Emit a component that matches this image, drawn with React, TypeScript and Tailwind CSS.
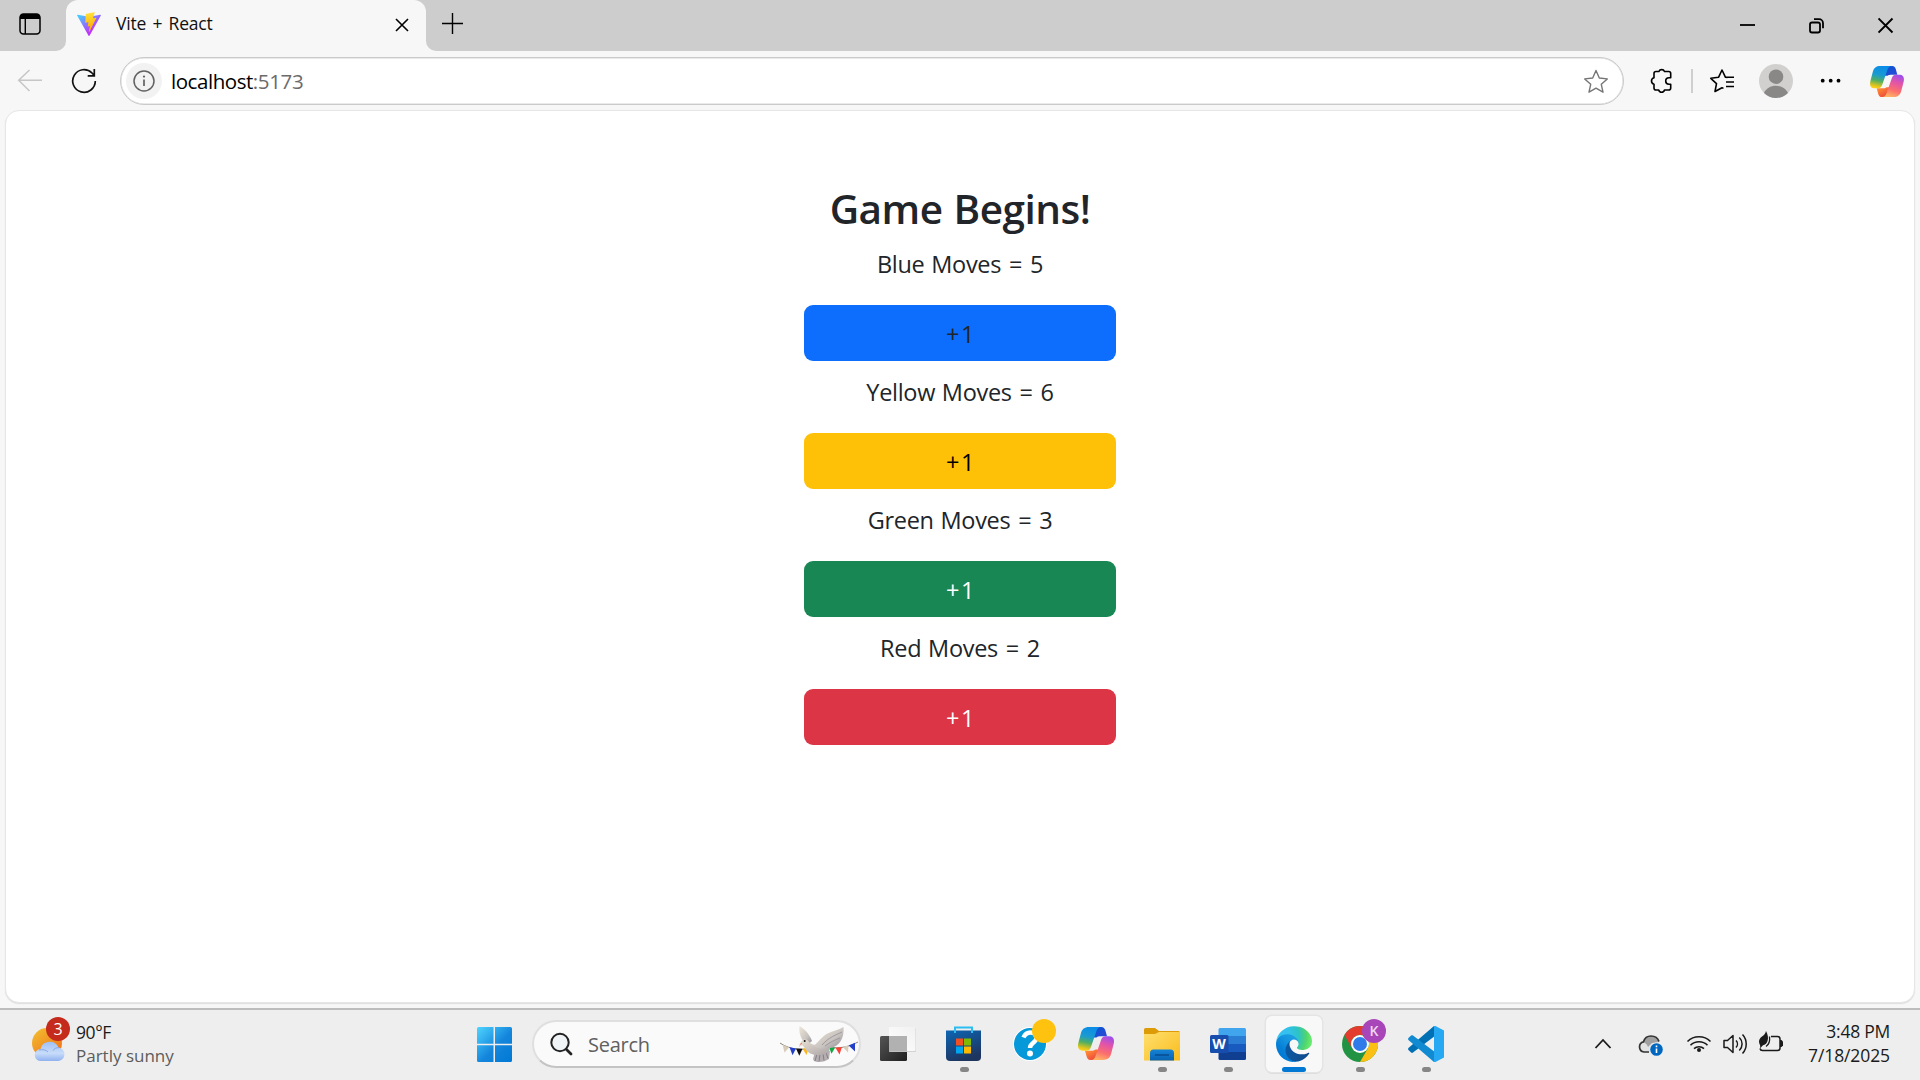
import React from 'react';

type ArtProps = { box: string; className: string; children: React.ReactNode };

/* Small drawing whose viewBox is given in screen units. */
function Art({ box, className, children }: ArtProps) {
  return (
    <svg viewBox={box} fill="none" className={`block shrink-0 ${className}`}>
      {children}
    </svg>
  );
}

function ViteLogo() {
  return (
    <svg viewBox="0 0 256 257" className="ml-[11px] block size-6 shrink-0">
      <defs>
        <linearGradient id="viteA" x1="-.8%" x2="57.6%" y1="7.6%" y2="78.4%">
          <stop offset="0" stopColor="#41D1FF" />
          <stop offset="1" stopColor="#BD34FE" />
        </linearGradient>
        <linearGradient id="viteB" x1="43.4%" x2="50.3%" y1="2.2%" y2="89%">
          <stop offset="0" stopColor="#FFEA83" />
          <stop offset=".083" stopColor="#FFDD35" />
          <stop offset="1" stopColor="#FFA800" />
        </linearGradient>
      </defs>
      <path fill="url(#viteA)" d="M255.153 37.938L134.897 252.976c-2.483 4.44-8.862 4.466-11.382.048L.875 37.958c-2.746-4.814 1.371-10.646 6.827-9.67l120.385 21.517a6.537 6.537 0 0 0 2.322-.004l117.867-21.483c5.438-.991 9.574 4.796 6.877 9.62Z" />
      <path fill="url(#viteB)" d="M185.432.063L96.44 17.501a3.268 3.268 0 0 0-2.634 3.014l-5.474 92.456a3.268 3.268 0 0 0 3.997 3.378l24.777-5.718c2.318-.535 4.413 1.507 3.936 3.838l-7.361 36.047c-.495 2.426 1.782 4.5 4.151 3.78l15.304-4.649c2.372-.72 4.652 1.36 4.15 3.788l-11.698 56.621c-.732 3.542 3.979 5.473 5.943 2.437l1.313-2.028l72.516-144.72c1.215-2.423-.88-5.186-3.54-4.672l-25.505 4.922c-2.396.462-4.435-1.77-3.759-4.114l16.646-57.705c.677-2.35-1.37-4.583-3.769-4.113Z" />
    </svg>
  );
}

function Copilot({ id, className }: { id: string; className: string }) {
  return (
    <svg viewBox="0 0 36 33" fill="none" className={`block shrink-0 ${className}`}>
      <defs>
        <linearGradient id={`${id}a`} x1="12" y1="0" x2="7" y2="24" gradientUnits="userSpaceOnUse">
          <stop offset="0" stopColor="#0b8ce8" />
          <stop offset=".4" stopColor="#1a9bd0" />
          <stop offset=".65" stopColor="#4fae63" />
          <stop offset=".9" stopColor="#e6c61a" />
          <stop offset="1" stopColor="#ffd21f" />
        </linearGradient>
        <linearGradient id={`${id}b`} x1="30" y1="9" x2="22" y2="33" gradientUnits="userSpaceOnUse">
          <stop offset="0" stopColor="#9a4df0" />
          <stop offset=".35" stopColor="#e254a8" />
          <stop offset=".7" stopColor="#fb6f6d" />
          <stop offset="1" stopColor="#ffb265" />
        </linearGradient>
        <linearGradient id={`${id}c`} x1="18" y1="1" x2="25" y2="11" gradientUnits="userSpaceOnUse">
          <stop offset="0" stopColor="#0d55cf" />
          <stop offset="1" stopColor="#2a48d8" />
        </linearGradient>
        <linearGradient id={`${id}d`} x1="10" y1="24" x2="15" y2="33" gradientUnits="userSpaceOnUse">
          <stop offset="0" stopColor="#ff8a35" />
          <stop offset="1" stopColor="#ee4a3c" />
        </linearGradient>
      </defs>
      <path fill={`url(#${id}c)`} d="M17 0h6.500c2 0 3.200 1.300 3.800 3.300L29 9.300h-6c-2 0-3.500.2-4.500 1.200H15Z" />
      <path fill={`url(#${id}d)`} d="M19 33h-6.500c-2 0-3.200-1.300-3.800-3.300L7 23.700h6c2 0 3.500-.2 4.500-1.200H21Z" />
      <path fill={`url(#${id}a)`} d="M11 0h12c-2.500 0-3.800 1.700-4.700 4.500l-5.100 14.700c-.9 2.900-2 4.500-5 4.500H5c-4.800 0-5.700-3.600-4.600-8L2.900 6.200C4 2.100 6.500 0 11 0Z" />
      <path fill={`url(#${id}b)`} d="M25 33H13c2.500 0 3.800-1.700 4.700-4.500l5.100-14.700c.9-2.900 2-4.500 5-4.500H31c4.800 0 5.700 3.600 4.600 8l-2.500 9.500C32 30.900 29.500 33 25 33Z" />
    </svg>
  );
}

function TabStrip() {
  return (
    <header className="flex h-[51px] shrink-0 bg-[#cdcdcd]">
      <div className="flex w-[66px] bg-[#cdcdcd] pl-[19px] pt-[13px]">
        <Art box="19 13 22 22" className="size-[22px]">
          <rect x="20" y="14" width="20" height="20" rx="3.500" stroke="#000" strokeWidth="1.500" />
          <path d="M20 19v-2a3 3 0 0 1 3-3h14a3 3 0 0 1 3 3v2Z" fill="#000" />
          <path d="M25.300 18v16" stroke="#000" strokeWidth="1.400" />
        </Art>
      </div>
      <div className="relative flex w-[360px] items-center rounded-t-[12px] bg-[#f7f7f7] pb-[3px]">
        <Art box="0 0 10 10" className="absolute -left-[10px] bottom-0 size-[10px]">
          <path d="M10 0v10H0A10 10 0 0 0 10 0Z" fill="#f7f7f7" />
        </Art>
        <Art box="0 0 10 10" className="absolute -right-[10px] bottom-0 size-[10px]">
          <path d="M0 0v10h10A10 10 0 0 1 0 0Z" fill="#f7f7f7" />
        </Art>
        <ViteLogo />
        <span className="ml-[15px] w-[269px] whitespace-nowrap pb-[2px] text-[17.500px] leading-6 tracking-[-0.2px] [word-spacing:2px] text-[#111]">Vite + React</span>
        <Art box="396 18 14 14" className="mt-[2px] ml-[10px] size-[14px]">
          <path d="m397 19 12 12m0-12-12 12" stroke="#000" strokeWidth="1.600" />
        </Art>
      </div>
      <Art box="442 13 22 22" className="ml-[16px] mt-[13px] size-[22px]">
        <path d="M452.500 13v21M442 23.500h21" stroke="#000" strokeWidth="1.400" />
      </Art>
      <div className="ml-auto flex pt-[17px] pr-[26px]">
        <Art box="1740 17 16 17" className="mr-[53px] h-[17px] w-4">
          <path d="M1740 25h15" stroke="#000" strokeWidth="1.800" />
        </Art>
        <Art box="1809 17 16 17" className="mr-[53px] h-[17px] w-4">
          <rect x="1810" y="22.500" width="10" height="10" rx="2" stroke="#000" strokeWidth="1.800" />
          <path d="M1814 19.200h5a4 4 0 0 1 4 4v5" stroke="#000" strokeWidth="1.800" />
        </Art>
        <Art box="1878 17 16 17" className="h-[17px] w-4">
          <path d="m1878.500 18.500 14 14m0-14-14 14" stroke="#000" strokeWidth="1.900" />
        </Art>
      </div>
    </header>
  );
}

function Toolbar() {
  return (
    <div className="flex h-[58px] shrink-0 items-center pt-[2px]">
      <Art box="17 69 26 24" className="ml-[17px] h-6 w-[26px]">
        <path d="M42 80.300H19M29.500 70 18.700 80.300 29.500 91" stroke="#c6c6c6" strokeWidth="1.500" />
      </Art>
      <Art box="71 68 26 26" className="ml-[28px] size-[26px]">
        <path d="M95.300 81A11.300 11.300 0 1 1 92 73l2 2.300M94.300 69v6.800h-6.600" stroke="#111" strokeWidth="1.700" />
      </Art>
      <div className="ml-[23px] flex h-[48px] w-[1504px] items-center rounded-full border border-[#cacaca] bg-white pl-[5px] shadow-[inset_0_0_0_0.5px_#d6d6d6]">
        <div className="flex size-9 items-center justify-center rounded-full bg-[#f2f2f2]">
          <Art box="0 0 22 22" className="size-[22px]">
            <circle cx="11" cy="11" r="10" stroke="#616161" strokeWidth="1.500" />
            <path d="M11 9.500v6.500" stroke="#616161" strokeWidth="1.700" />
            <circle cx="11" cy="6.600" r="1.100" fill="#616161" />
          </Art>
        </div>
        <span className="ml-[9px] whitespace-nowrap text-[20.500px] tracking-[-0.45px] leading-7 text-black">
          localhost<span className="tracking-[-0.350px] text-[#6b6b6b]">:5173</span>
        </span>
        <Art box="1583 69 26 25" className="ml-auto mr-[14px] h-[25px] w-[26px]">
          <path d="m1596 70.500 3.300 7.500 8 .9-6 5.400 1.700 7.900-7-4-7 4 1.700-7.900-6-5.400 8-.9Z" stroke="#767676" strokeWidth="1.400" strokeLinejoin="round" />
        </Art>
      </div>
      <Art box="1650 68 24 26" className="ml-[26px] h-[26px] w-6">
        <path d="M1656 71.500h2.900a3 3 0 0 1 5.600 0h4.200a2 2 0 0 1 2 2v4.200h-1.700a3.300 3.300 0 0 0 0 6.600h1.700v3.700a2 2 0 0 1-2 2h-4.200a3 3 0 0 1-5.800 0h-2.700a2 2 0 0 1-2-2v-3.800a3.300 3.300 0 0 1 0-6.400v-4.300a2 2 0 0 1 2-2Z" stroke="#000" strokeWidth="1.600" strokeLinejoin="round" />
      </Art>
      <div className="ml-[17px] h-6 w-[2px] bg-[#cfcfcf]" />
      <Art box="1709 68 26 26" className="ml-[16px] size-[26px]">
        <path d="M1727.500 77.500l-2-.2-3.500-7.300-3.500 7.300-7.700 1 5.700 5.300-1.500 7.900 7-3.800 1.500.7M1725.500 77.300h8.500M1726 82h8M1726 86.500h8" stroke="#000" strokeWidth="1.600" strokeLinejoin="round" />
      </Art>
      <Art box="1759 64 34 34" className="ml-[24px] size-[34px]">
        <circle cx="1776" cy="81" r="17" fill="#d2d0ce" />
        <circle cx="1776" cy="76.700" r="7.300" fill="#8a8886" />
        <path d="M1764 93c2-4.500 6.500-7.200 12-7.200s10 2.700 12 7.200a17 17 0 0 1-24 0Z" fill="#8a8886" />
      </Art>
      <Art box="1820 79 22 6" className="ml-[27px] h-[6px] w-[22px]">
        <circle cx="1822.700" cy="81.700" r="1.900" fill="#000" />
        <circle cx="1830.700" cy="81.700" r="1.900" fill="#000" />
        <circle cx="1838.500" cy="81.700" r="1.900" fill="#000" />
      </Art>
      <Copilot id="cpTop" className="ml-[28px] h-[31px] w-[34px]" />
    </div>
  );
}

const players = [
  { name: 'Blue', moves: 5, style: 'bg-[#0d6efd] text-[#212529]' },
  { name: 'Yellow', moves: 6, style: 'bg-[#ffc107] text-black' },
  { name: 'Green', moves: 3, style: 'bg-[#198754] text-white' },
  { name: 'Red', moves: 2, style: 'bg-[#dc3545] text-white' },
];

function Game() {
  return (
    <main className="mx-[5px] mt-[1px] flex h-[893px] shrink-0 flex-col items-center rounded-[14px] border border-[#e6e6e6] bg-white pt-[68px] text-[#212529] shadow-[0_1px_1px_#dedede]">
      <h1 className="h-[62px] whitespace-nowrap text-[40.500px] font-semibold leading-[60px] tracking-[-0.500px] [word-spacing:1px]">Game Begins!</h1>
      {players.map((p) => (
        <section key={p.name} className="flex h-32 flex-col items-center">
          <p className="h-[64px] whitespace-nowrap pt-[5px] text-[23.500px] leading-[36px] tracking-[-0.300px] [word-spacing:1px]">
            {p.name} Moves <span className="mx-[1px]">=</span> {p.moves}
          </p>
          <button className={`flex h-[56px] w-[312px] items-center justify-center rounded-[9px] pt-[2px] pl-[2px] text-[23.500px] leading-9 tracking-[1.500px] ${p.style}`}>+1</button>
        </section>
      ))}
    </main>
  );
}

function Weather() {
  return (
    <div className="flex w-[477px] shrink-0 pl-[31px]">
      <div className="relative mt-[6px] h-[48px] w-[40px]">
        <Art box="31 1016 40 48" className="h-[48px] w-[40px]">
          <defs>
            <linearGradient id="sun" x1="0" y1="0" x2=".8" y2="1">
              <stop offset="0" stopColor="#f2c230" />
              <stop offset="1" stopColor="#f0701a" />
            </linearGradient>
            <linearGradient id="cloud" x1="0" y1="0" x2="0" y2="1">
              <stop offset="0" stopColor="#9fc0f5" />
              <stop offset=".6" stopColor="#c8dcfa" />
              <stop offset="1" stopColor="#8fb2ef" />
            </linearGradient>
          </defs>
          <circle cx="47" cy="1043" r="15" fill="url(#sun)" />
          <path d="M41 1061a6 6 0 0 1-.5-12 9.500 9.500 0 0 1 18-1.500 6.800 6.800 0 0 1 0 13.500Z" fill="url(#cloud)" />
          <path d="M39 1050c4-1 7 0 9 2M59 1047.700c-3-.2-5 1-6 3" stroke="#86a9e8" strokeWidth="1" />
        </Art>
        <div className="absolute left-[15px] top-[1px] flex size-6 items-center justify-center rounded-full bg-[#c42b1c] text-[16px] leading-none text-white">3</div>
      </div>
      <div className="ml-[5px] pt-[10px] text-[17px] leading-6">
        <div className="text-[17.500px] tracking-[-0.4px] text-[#1a1a1a]">90°F</div>
        <div className="whitespace-nowrap text-[#5c5c5c]">Partly sunny</div>
      </div>
    </div>
  );
}

function WindowsLogo() {
  return (
    <Art box="0 0 35 35" className="mt-[17px] size-[35px]">
      <defs>
        <linearGradient id="win" x1="0" y1="0" x2="35" y2="35" gradientUnits="userSpaceOnUse">
          <stop offset="0" stopColor="#4fd5ff" />
          <stop offset=".55" stopColor="#1486dc" />
          <stop offset="1" stopColor="#0078d4" />
        </linearGradient>
      </defs>
      <path fill="url(#win)" d="M1.500 0h15v16.700H0V1.500A1.500 1.500 0 0 1 1.500 0ZM18 0h15.500A1.500 1.500 0 0 1 35 1.500v15.200H18ZM0 18.200h16.500V35h-15A1.500 1.500 0 0 1 0 33.500ZM18 18.200h17v15.300a1.500 1.500 0 0 1-1.500 1.500H18Z" />
    </Art>
  );
}

function Dove() {
  return (
    <Art box="779 1024 80 40" className="ml-auto h-10 w-20">
      <defs>
        <linearGradient id="wing" x1="0" y1="0" x2="1" y2="1">
          <stop offset="0" stopColor="#eee6d8" />
          <stop offset=".6" stopColor="#c8c3bf" />
          <stop offset="1" stopColor="#8c8894" />
        </linearGradient>
        <linearGradient id="dbody" x1="0" y1="0" x2="1" y2="1">
          <stop offset="0" stopColor="#ece3d5" />
          <stop offset="1" stopColor="#a9a3a5" />
        </linearGradient>
      </defs>
      <path d="M780 1043c10 7 24 8 38 4M829 1047c10 2 20 0 29-5" stroke="#8b857e" strokeWidth="1" />
      <path d="m782.500 1044.500 6.500 3-4.500 5Z" fill="#d8cbb8" />
      <path d="m789.500 1047.300 6.500 1.200-3.500 6.700Z" fill="#2340c8" />
      <path d="m796 1048.500 6.500.3-3.200 7Z" fill="#111" />
      <path d="m802.500 1048.500 6-.5-2 7Z" fill="#fdb61c" />
      <path d="m829 1047.300 6 .4-3.500 6Z" fill="#12a846" />
      <path d="m835.500 1047.800 6.500-.8-2.500 7.500Z" fill="#fb4136" />
      <path d="m842.500 1046.800 6-1.300-.5 7Z" fill="#d8cbb8" />
      <path d="m848.700 1045.500 6.300-2.800v8.800Z" fill="#2340c8" />
      <path d="M799.500 1026c5 3 10 8 12.500 15l-5 4c-6-5-8.500-12-7.500-19Z" fill="url(#wing)" />
      <path d="m815 1052 15-1-1 8-4 2-3 .7-5 .3-3-1-1-2Z" fill="#b5aeb0" />
      <path d="m817 1054-2 7m5-7-1 7.500m4-8 1 7m2-8 2 6" stroke="#77717d" strokeWidth=".8" />
      <path d="M801 1042c1-3 6-3.500 8 0 3 3 7 4 12 2l9 4c0 5-7 8-14 7-6-.8-9-3-12-8l-2-2-3 2c0-2 1-3 2-5Z" fill="url(#dbody)" />
      <path d="M843.500 1027c1 11-4 19-13 21-6 1.500-12 1-17-2 4-3 7-8 13-12 6-3 12-4 17-7Z" fill="url(#wing)" />
      <path d="M842 1032c-6 3-13 5-20 13m18-7c-5 2-10 4-15 8" stroke="#938e98" strokeWidth=".8" />
      <circle cx="804.700" cy="1041" r="1" fill="#111" />
      <path d="m801.500 1042.500-2 2.500 2.500-1Z" fill="#f2745d" />
    </Art>
  );
}

function SearchBox() {
  return (
    <div className="ml-5 mt-[10px] flex h-[48px] w-[329px] items-center rounded-full border-2 border-[#dfdfdf] border-b-[#c4c4c4] bg-[#fafafa]">
      <Art box="549 1032 24 24" className="ml-[15px] size-6">
        <circle cx="560" cy="1042.500" r="8.700" stroke="#222" strokeWidth="2" fill="#f0f4f7" />
        <path d="m566.500 1049.500 4.500 4.500" stroke="#222" strokeWidth="2.800" strokeLinecap="round" />
      </Art>
      <span className="ml-[15px] pt-[2px] text-[20px] leading-7 tracking-[-0.25px] text-[#606060]">Search</span>
      <Dove />
    </div>
  );
}

function TaskViewIcon() {
  return (
    <Art box="0 0 36 36" className="size-9">
      <defs>
        <linearGradient id="tv" x1="0" y1="0" x2="1" y2="1">
          <stop offset="0" stopColor="#555" />
          <stop offset="1" stopColor="#1f1f1f" />
        </linearGradient>
        <linearGradient id="tvw" x1="0" y1="1" x2="1" y2="0">
          <stop offset="0" stopColor="#fff" />
          <stop offset="1" stopColor="#f1f1f1" />
        </linearGradient>
      </defs>
      <rect x="0" y="10" width="27" height="25" rx="1.500" fill="url(#tv)" />
      <rect x="9" y="2" width="27" height="24" rx="1" fill="#d2d2d2" />
      <rect x="9" y="1" width="26.500" height="24" rx="1" fill="url(#tvw)" />
      <path d="M9 10h18v15.500H9Z" fill="#b1b1b1" />
    </Art>
  );
}

function StoreIcon() {
  return (
    <Art box="0 0 36 36" className="size-9">
      <defs>
        <linearGradient id="store" x1="0" y1="0" x2=".4" y2="1">
          <stop offset="0" stopColor="#0d66b4" />
          <stop offset="1" stopColor="#1e3560" />
        </linearGradient>
      </defs>
      <path d="M0 4.500h35V31a4 4 0 0 1-4 4H4a4 4 0 0 1-4-4Z" fill="url(#store)" />
      <path d="M9 7V1.500h17V7" stroke="#2bbdf2" strokeWidth="2" />
      <path d="M10 12.500h7v7h-7Z" fill="#f25022" />
      <path d="M18 12.500h7v7h-7Z" fill="#7fba00" />
      <path d="M10 20.500h7v7h-7Z" fill="#00a4ef" />
      <path d="M18 20.500h7v7h-7Z" fill="#ffb900" />
    </Art>
  );
}

function HelpIcon() {
  return (
    <div className="relative size-9">
      <Art box="0 0 36 36" className="size-9">
        <circle cx="18" cy="18" r="17" fill="#fff" />
        <circle cx="18" cy="18" r="16" fill="#0599d9" />
        <path d="M11.500 11.500c1.500-3.500 4-5 7-5s6 2 6 5.300c0 5-6.500 5-6.500 10.200" stroke="#fff" strokeWidth="4.400" />
        <circle cx="18" cy="27.500" r="3" fill="#fff" />
      </Art>
      <div className="absolute left-5 top-[-7px] size-6 rounded-full bg-[#ffc20e]" />
    </div>
  );
}

function FolderIcon() {
  return (
    <Art box="0 0 36 36" className="size-9">
      <defs>
        <linearGradient id="fold" x1="0" y1="0" x2="1" y2="1">
          <stop offset="0" stopColor="#ffdf6e" />
          <stop offset="1" stopColor="#f9bc1d" />
        </linearGradient>
        <linearGradient id="foldb" x1="0" y1="0" x2="0" y2="1">
          <stop offset="0" stopColor="#1583d6" />
          <stop offset="1" stopColor="#0a62b2" />
        </linearGradient>
      </defs>
      <path d="M0 3.500A1.500 1.500 0 0 1 1.500 2H11l4 3h19.500A1.500 1.500 0 0 1 36 6.500V12H0Z" fill="#dd9c07" />
      <path d="M0 8h11l4-2h21v28.500H0Z" fill="url(#fold)" />
      <path d="M6 34.500V27a3.500 3.500 0 0 1 3.500-3.500h17A3.500 3.500 0 0 1 30 27v7.500Z" fill="url(#foldb)" />
      <path d="M11 29h14" stroke="#084d91" strokeWidth="1.500" />
    </Art>
  );
}

function WordIcon() {
  return (
    <div className="relative size-9">
      <Art box="0 0 36 36" className="size-9">
        <path d="M8.500 10V3.500A1.500 1.500 0 0 1 10 2h24.500A1.500 1.500 0 0 1 36 3.500V10Z" fill="#41a5ee" />
        <path d="M8.500 10H36v8H8.500Z" fill="#2b7cd3" />
        <path d="M8.500 18H36v8H8.500Z" fill="#185abd" />
        <path d="M8.500 26H36v6.500a1.500 1.500 0 0 1-1.500 1.500H10a1.500 1.500 0 0 1-1.500-1.500Z" fill="#103f91" />
        <rect x="0" y="9" width="18.500" height="18" rx="1.500" fill="#174eae" />
      </Art>
      <span className="absolute left-0 top-[9px] w-[18px] text-center text-[14px] font-bold leading-[18px] text-white">W</span>
    </div>
  );
}

function EdgeIcon() {
  return (
    <svg viewBox="0 0 256 256" className="block size-9">
      <defs>
        <linearGradient id="eA" x1="58" y1="177" x2="236" y2="177" gradientUnits="userSpaceOnUse">
          <stop offset="0" stopColor="#0c59a4" />
          <stop offset="1" stopColor="#114a8b" />
        </linearGradient>
        <linearGradient id="eB" x1="157" y1="110" x2="46" y2="231" gradientUnits="userSpaceOnUse">
          <stop offset="0" stopColor="#1b9de2" />
          <stop offset=".3" stopColor="#1595df" />
          <stop offset=".7" stopColor="#0680d7" />
          <stop offset="1" stopColor="#0078d4" />
        </linearGradient>
        <radialGradient id="eC" cx="26" cy="70" r="225" gradientUnits="userSpaceOnUse">
          <stop offset="0" stopColor="#35c1f1" />
          <stop offset=".3" stopColor="#34c1ed" />
          <stop offset=".6" stopColor="#2dc2c4" />
          <stop offset=".85" stopColor="#52d66c" />
          <stop offset="1" stopColor="#66eb6e" />
        </radialGradient>
      </defs>
      <path fill="url(#eA)" d="M231 190.500c-3.400 1.800-6.900 3.400-10.500 4.700a101.500 101.500 0 0 1-35.900 6.500c-47.300 0-88.500-32.500-88.500-74.300.1-11.400 6.400-21.900 16.400-27.300-42.800 1.800-53.800 46.400-53.800 72.500 0 74 68.100 81.400 82.800 81.400 7.900 0 19.800-2.300 27-4.600l1.300-.4a128.300 128.300 0 0 0 66.600-52.800 4 4 0 0 0-5.400-5.700z" />
      <path fill="url(#eB)" d="M105.700 241.400a79.200 79.200 0 0 1-22.700-21.300 80.700 80.700 0 0 1 29.500-120c3.200-1.500 8.500-4.100 15.600-4a32.400 32.400 0 0 1 25.700 13 31.900 31.900 0 0 1 6.300 18.700c0-.2 24.500-79.600-80-79.600C36.100 48.200.1 89.800.1 126.400c-.2 19.300 4 38.500 12.100 56a128 128 0 0 0 156.400 67.100 75.500 75.500 0 0 1-62.800-8z" />
      <path fill="url(#eC)" d="M152.300 148.900c-.9 1-3.400 2.500-3.400 5.600 0 2.600 1.700 5.200 4.800 7.300 14.300 10 41.400 8.600 41.500 8.600 10.700 0 21.100-2.900 30.300-8.300A61.400 61.400 0 0 0 256 109.100c.2-22.400-8-37.300-11.300-43.900C223.900 24.300 178.800.9 129.900.9 61 0 .9 55.200 0 124.100c.5-36.300 36.500-65.500 80-65.500 3.500 0 23.600.3 42.300 10.100 16.400 8.600 25 19.100 31 29.400 6.200 10.700 7.300 24.300 7.300 29.700s-2.700 13.300-8.300 21.100z" />
    </svg>
  );
}

function ChromeIcon() {
  return (
    <div className="relative size-9">
      <Art box="0 0 36 36" className="size-9">
        <circle cx="18" cy="18" r="18" fill="#229342" />
        <path d="M18 9h15.600A18 18 0 0 1 18 36l7.800-13.500A9 9 0 0 0 18 9Z" fill="#fcc015" />
        <path d="M2.400 9a18 18 0 0 1 31.200 0H18a9 9 0 0 0-7.800 13.500Z" fill="#e33b2e" />
        <circle cx="18" cy="18" r="9" fill="#fff" />
        <circle cx="18" cy="18" r="7" fill="#307bea" />
      </Art>
      <div className="absolute left-5 top-[-7px] flex size-6 items-center justify-center rounded-full bg-[#a846b9] text-[14px] font-semibold leading-none text-[#eed6f2]">K</div>
    </div>
  );
}

function CodeIcon() {
  return (
    <Art box="0 0 36 36" className="size-9">
      <path d="m26 0 1.500 9.500L5 26.500c-.6.500-1.300.5-1.900 0L.700 24.300c-.8-.7-.8-1.800 0-2.500Z" fill="#0070b5" />
      <path d="m26 36 1.500-9.500L5 9.500c-.6-.5-1.300-.5-1.900 0L.7 11.700c-.8.700-.8 1.800 0 2.500Z" fill="#108ad0" />
      <path d="M26 0h1.500L36 4.500v27L27.500 36H26Z" fill="#27a8f2" />
    </Art>
  );
}

const apps = [
  { name: 'taskview', icon: <TaskViewIcon />, state: 'none' },
  { name: 'store', icon: <StoreIcon />, state: 'running' },
  { name: 'help', icon: <HelpIcon />, state: 'none' },
  { name: 'copilot', icon: <Copilot id="cpBar" className="h-[33px] w-9" />, state: 'none' },
  { name: 'explorer', icon: <FolderIcon />, state: 'running' },
  { name: 'word', icon: <WordIcon />, state: 'running' },
  { name: 'edge', icon: <EdgeIcon />, state: 'active' },
  { name: 'chrome', icon: <ChromeIcon />, state: 'running' },
  { name: 'code', icon: <CodeIcon />, state: 'running' },
];

const tileStyle: Record<string, string> = {
  none: '',
  running: '',
  active: 'bg-[#f8f8f8] shadow-[0_0_0_1.5px_#e4e4e4,0_2px_0_0_#d8d8d8]',
};
const markStyle: Record<string, string> = {
  none: 'w-0',
  running: 'w-[9px] bg-[#868686]',
  active: 'w-6 bg-[#0078d4]',
};

function Tray() {
  return (
    <div className="ml-auto flex pr-[30px]">
      <Art box="1594 1032 18 24" className="mr-[26px] mt-[22px] h-6 w-[18px]">
        <path d="m1595.500 1048 7.500-8 7.500 8" stroke="#1a1a1a" strokeWidth="1.800" />
      </Art>
      <Art box="1638 1032 26 26" className="mr-[22px] mt-[22px] size-[26px]">
        <path d="M1644 1052a5.200 5.200 0 0 1-.5-10.200c1-3.500 4-5.800 7.500-5.800 4 0 7 2.500 8 6l-9 10Z" fill="#e2e2e2" />
        <path d="M1643.500 1042c1-3.500 4-6 7.500-6 4 0 7 2.500 8 6l-7 1-4 4c-1-3-3-4-4.500-5Z" fill="#a0a0a0" />
        <path d="M1649 1052h-5a5.200 5.200 0 0 1-.5-10.200c1-3.500 4-5.800 7.500-5.800 4 0 7 2.300 8 5.500" stroke="#333" strokeWidth="1.700" />
        <circle cx="1656.500" cy="1049.500" r="7" fill="#eee" />
        <circle cx="1656.500" cy="1049.500" r="6.300" fill="#0067c0" />
        <path d="M1656.500 1048.500v4.500M1656.500 1045.500v1.700" stroke="#fff" strokeWidth="1.600" />
      </Art>
      <Art box="1686 1032 26 24" className="mr-[10px] mt-[22px] h-6 w-[26px]">
        <path d="M1687.500 1041.500a16.400 16.400 0 0 1 23 0M1690.500 1045.300a12 12 0 0 1 17 0M1694 1048.700a7.200 7.200 0 0 1 10 0" stroke="#1a1a1a" strokeWidth="1.600" />
        <circle cx="1699" cy="1050" r="2" fill="#1a1a1a" />
      </Art>
      <Art box="1722 1032 26 24" className="mr-[10px] mt-[22px] h-6 w-[26px]">
        <path d="M1724 1040.500h3.500l5.500-5v17l-5.500-5h-3.500Z" stroke="#1a1a1a" strokeWidth="1.500" strokeLinejoin="round" />
        <path d="M1736 1040.500a5 5 0 0 1 0 7M1739.300 1037.500a9 9 0 0 1 0 13M1742.500 1034.500a14 14 0 0 1 0 19" stroke="#1a1a1a" strokeWidth="1.500" />
      </Art>
      <Art box="1758 1031 26 24" className="mt-[20px] h-6 w-[26px]">
        <path d="M1771 1037.500h6.500a2.500 2.500 0 0 1 2.500 2.500v9a2.500 2.500 0 0 1-2.500 2.500h-15a2.500 2.500 0 0 1-2.500-2" stroke="#1a1a1a" strokeWidth="1.500" />
        <path d="M1780 1041h1.500l1.500 1.500v4l-1.500 1.500h-1.500Z" fill="#1a1a1a" />
        <path d="M1766 1032c2 4 2.500 7 1.500 10-.8 2.500-2.500 4-4.500 4.300l-3 3.200c.5-2 .3-3-.7-5-1-3 .5-5.500 2.700-7 2-1.300 3.500-3 4-5.500Z" fill="#1a1a1a" />
        <path d="M1769.500 1037.500c.5 4-.5 8-3.500 10" stroke="#1a1a1a" strokeWidth="1.300" />
      </Art>
      <div className="ml-[22px] flex w-[84px] flex-col items-end pt-[9px] text-[17.500px] leading-6 text-[#1a1a1a]">
        <div className="whitespace-nowrap tracking-[-0.25px]">3:48 PM</div>
        <div className="whitespace-nowrap tracking-[-0.100px]">7/18/2025</div>
      </div>
    </div>
  );
}

function Taskbar() {
  return (
    <footer className="mt-auto flex h-[72px] shrink-0 border-t-2 border-[#bdbdbd] bg-[#eee]">
      <Weather />
      <WindowsLogo />
      <SearchBox />
      <nav className="ml-1 flex">
        {apps.map((a) => (
          <div key={a.name} className="flex w-[66px] justify-center pt-[6px]">
            <div className={`flex h-[56px] w-[56px] flex-col items-center rounded-[6px] ${tileStyle[a.state]}`}>
              <div className="flex h-[52px] items-center pt-[4px]">{a.icon}</div>
              <div className={`h-[5px] shrink-0 rounded-full ${markStyle[a.state]}`} />
            </div>
          </div>
        ))}
      </nav>
      <Tray />
    </footer>
  );
}

export default function App() {
  return (
    <div className="flex h-[1080px] w-[1920px] flex-col overflow-hidden bg-[#f7f7f7] font-['Open_Sans','Noto_Sans',sans-serif]">
      <TabStrip />
      <Toolbar />
      <Game />
      <Taskbar />
    </div>
  );
}
